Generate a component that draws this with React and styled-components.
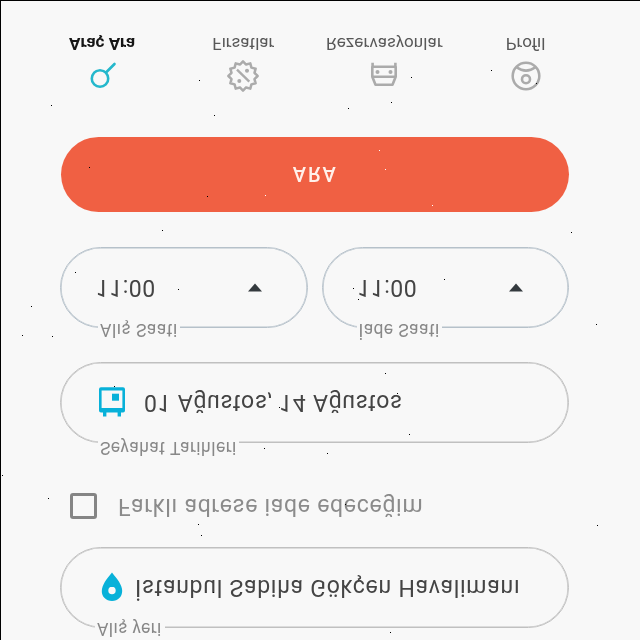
import React from 'react';
import styled, { createGlobalStyle } from 'styled-components';

const GlobalStyle = createGlobalStyle`
  * { box-sizing: border-box; }
  body { margin: 0; background: #f8f8f8; }
`;

const Frame = styled.div`
  position: relative;
  width: 640px;
  height: 640px;
  overflow: hidden;
  border-top: 1px solid #000;
  border-left: 1px solid #000;
  background: #f8f8f8;
`;

/* The whole screen is mirrored top to bottom. */
const Screen = styled.main`
  width: 639px;
  height: 639px;
  padding: 12px 71px 0 59px;
  display: flex;
  flex-direction: column;
  transform: scaleY(-1);
  font-family: Roboto, 'Liberation Sans', sans-serif;
  color: #484848;
`;

const Field = styled.div`
  position: relative;
  display: flex;
  align-items: center;
  height: 81px;
  flex: ${(p) => (p.$half ? '1 1 0' : 'none')};
  padding-left: ${(p) => p.$inset + 1}px;
  padding-right: 45px;
  border: 1px solid ${(p) => (p.$half ? '#b6c1ca' : '#c0c0c0')};
  box-shadow: inset 0 0 0 0.6px ${(p) => (p.$half ? '#b6c1ca' : '#c0c0c0')};
  border-radius: 41px;
`;

const Legend = styled.span`
  position: absolute;
  top: ${(p) => p.$top}px;
  left: ${(p) => p.$left}px;
  width: ${(p) => p.$width}px;
  padding-left: 2px;
  background: #f8f8f8;
  color: #888;
  font-size: 17.5px;
  line-height: 20px;
  letter-spacing: ${(p) => p.$spacing}px;
  white-space: nowrap;
`;

const Value = styled.span`
  flex: 1;
  margin-left: ${(p) => p.$gap || 0}px;
  font-size: 23px;
  line-height: 28px;
  letter-spacing: ${(p) => p.$spacing}px;
  white-space: nowrap;
  color: ${(p) => p.$color || '#444'};
`;

const CheckRow = styled.label`
  display: flex;
  align-items: center;
  height: 26px;
  margin: 28px 0 50px;
  padding-left: 10px;
`;

const Box = styled.span`
  width: 27px;
  height: 26px;
  border: 3px solid #858585;
  border-radius: 3px;
`;

const Times = styled.div`
  display: flex;
  gap: 14px;
  margin-top: 34px;
`;

const Arrow = styled.svg`
  width: 14px;
  height: 9px;
  flex: none;
`;

const SearchButton = styled.button`
  height: 75px;
  margin: 35px 0 0 0.5px;
  border: 0;
  border-radius: 38px;
  background: #f06043;
  color: #fff0ea;
  font: 500 20px/24px Roboto, 'Liberation Sans', sans-serif;
  letter-spacing: 1.9px;
  padding: 0 0 0 1px;
`;

const Nav = styled.nav`
  display: grid;
  grid-template-columns: repeat(4, 141.2px);
  margin: 45px 0 0 -28.500px;
`;

const NavItem = styled.div`
  display: flex;
  flex-direction: column;
  align-items: center;
  gap: 6px;
  font-size: 17px;
  line-height: 20px;
  letter-spacing: ${(p) => p.$spacing}px;
  font-weight: ${(p) => (p.$active ? 700 : 400)};
  color: ${(p) => (p.$active ? '#161616' : '#585858')};
  white-space: nowrap;
`;

const Icon = styled.svg`
  width: 32px;
  height: 32px;
  fill: none;
  stroke: ${(p) => (p.$active ? '#25b8cc' : '#ababab')};
  stroke-width: 2.6;
`;

const FieldIcon = styled.svg`
  width: ${(p) => p.$w}px;
  height: 30px;
  flex: none;
  fill: #08b1d9;
`;

const Specks = styled.svg`
  position: absolute;
  top: -1px;
  left: -1px;
  width: 640px;
  height: 640px;
  pointer-events: none;
`;

const badge = Array.from({ length: 24 }, (_, i) => {
  const r = i % 2 ? 11.9 : 14.6;
  const a = (i * Math.PI) / 12;
  return `${(16 + r * Math.sin(a)).toFixed(2)},${(16 - r * Math.cos(a)).toFixed(2)}`;
}).join(' ');

const darkSpecks = [
  [199, 80], [51, 105], [214, 115], [411, 77], [491, 70], [536, 83], [391, 102], [348, 108],
  [89, 167], [207, 196], [162, 230], [571, 232], [75, 272], [178, 289], [444, 279], [353, 288],
  [358, 299], [596, 324], [31, 306], [22, 335], [52, 336], [114, 386], [279, 407], [264, 448],
  [327, 453], [385, 373], [397, 393], [409, 434], [2, 475], [48, 498], [198, 524], [201, 535],
  [213, 592], [345, 504], [597, 525], [390, 632],
];
const lightSpecks = [[265, 195], [379, 150], [385, 169], [432, 205]];

function Down() {
  return (
    <Arrow viewBox="0 0 14 9">
      <path d="M0 .5h14L7 8.5z" fill="#343a3e" />
    </Arrow>
  );
}

export default function App() {
  return (
    <Frame>
      <GlobalStyle />
      <Screen>
        <Field $inset={39}>
          <Legend $top={-12} $left={34} $width={70} $spacing={0.42}>Alış yeri</Legend>
          <FieldIcon $w={22} viewBox="0 0 22 30">
            <path fillRule="evenodd" d="M11 1C5 1 .8 5.4.8 11c0 6.2 5 12 10.2 18.5C16.200 23 21.200 17.200 21.200 11 21.200 5.400 17 1 11 1zm0 6.700a3.700 3.700 0 1 1 0 7.400 3.700 3.700 0 0 1 0-7.400z" />
          </FieldIcon>
          <Value $gap={12} $spacing={0.75}>İstanbul Sabiha Gökçen Havalimanı</Value>
        </Field>

        <CheckRow>
          <Box />
          <Value $gap={21} $spacing={0.73} $color="#8b8b8b">Farklı adrese iade edeceğim</Value>
        </CheckRow>

        <Field $inset={37}>
          <Legend $top={-16} $left={37} $width={141} $spacing={0.48}>Seyahat Tarihleri</Legend>
          <FieldIcon $w={26} viewBox="0 0 26 30">
            <path fillRule="evenodd" d="M4 .5h3.400v4h11.200v-4H22v4h2a2 2 0 0 1 2 2v21.200a2 2 0 0 1-2 2H2a2 2 0 0 1-2-2V6.500a2 2 0 0 1 2-2h2zM2.600 9v17.600h20.800V9z" />
            <path d="M13 16.300h7v7h-7z" />
          </FieldIcon>
          <Value $gap={19} $spacing={0.72}>01 Ağustos, 14 Ağustos</Value>
        </Field>

        <Times>
          <Field $half $inset={34}>
            <Legend $top={-13} $left={37} $width={82} $spacing={0.5}>Alış Saati</Legend>
            <Value $spacing={0.45}>11:00</Value>
            <Down />
          </Field>
          <Field $half $inset={34}>
            <Legend $top={-13} $left={34} $width={85} $spacing={0.4}>İade Saati</Legend>
            <Value $spacing={0.45}>11:00</Value>
            <Down />
          </Field>
        </Times>

        <SearchButton>ARA</SearchButton>

        <Nav>
          <NavItem $active $spacing={0}>
            <Icon $active viewBox="0 0 32 32">
              <circle cx="14" cy="13.500" r="8.200" />
              <path d="M20 19.500L28.500 28" strokeLinecap="round" />
            </Icon>
            Araç Ara
          </NavItem>
          <NavItem $spacing={0}>
            <Icon viewBox="0 0 32 32">
              <polygon points={badge} strokeLinejoin="round" strokeWidth="2.500" />
              <path d="M10 22.300L22.300 10.300" strokeWidth="2.400" />
              <circle cx="20" cy="21.300" r="2" fill="#ababab" stroke="none" />
              <circle cx="12.300" cy="11" r="2" fill="#ababab" stroke="none" />
            </Icon>
            Fırsatlar
          </NavItem>
          <NavItem $spacing={0.13}>
            <Icon viewBox="0 0 32 32">
              <path d="M4.300 15.300L7.500 7.200h17l3.200 8.100v10H4.300zM4.300 15.300h23.400M4.600 25v4.300M27.400 25v4.300" strokeLinejoin="round" />
              <circle cx="9.500" cy="19.900" r="2" fill="#ababab" stroke="none" />
              <circle cx="22.500" cy="19.900" r="2" fill="#ababab" stroke="none" />
            </Icon>
            Rezervasyonlar
          </NavItem>
          <NavItem $spacing={0}>
            <Icon viewBox="0 0 32 32">
              <circle cx="16" cy="16" r="13.300" />
              <circle cx="16" cy="12.700" r="4" />
              <path d="M6.500 24.800Q16 17.800 25.500 24.800" />
            </Icon>
            Profil
          </NavItem>
        </Nav>
      </Screen>
      <Specks viewBox="0 0 640 640" shapeRendering="crispEdges">
        {darkSpecks.map(([x, y]) => <rect key={`${x}-${y}`} x={x} y={y} width="1" height="1" fill="#000" />)}
        {lightSpecks.map(([x, y]) => <rect key={`${x}-${y}`} x={x} y={y} width="1" height="1" fill="#fff" />)}
      </Specks>
    </Frame>
  );
}
